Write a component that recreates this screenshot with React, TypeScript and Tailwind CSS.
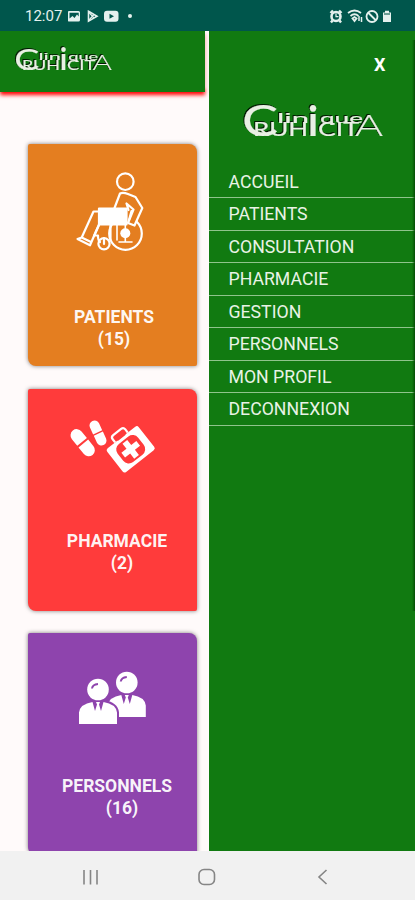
import React from 'react';

const menuItems = [
  'ACCUEIL',
  'PATIENTS',
  'CONSULTATION',
  'PHARMACIE',
  'GESTION',
  'PERSONNELS',
  'MON PROFIL',
  'DECONNEXION',
];

const Logo = ({ className }: { className: string }) => (
  <svg
    viewBox="0 0 140 37"
    preserveAspectRatio="none"
    className={`overflow-visible drop-shadow-[-1px_-1px_0.5px_#021a02] ${className}`}
  >
    <g fill="#e9f0e4" stroke="#e9f0e4" strokeWidth="0.2" fontFamily="Lato, sans-serif">
      <text x="-1" y="34" fontSize="42" textLength="36" lengthAdjust="spacingAndGlyphs">C</text>
      <text x="34" y="20.5" fontSize="13" textLength="32" lengthAdjust="spacingAndGlyphs">lin</text>
      <text x="77" y="20.5" fontSize="13" textLength="43" lengthAdjust="spacingAndGlyphs">que</text>
      <text x="65" y="34" fontSize="42" fontWeight="700" textLength="10" lengthAdjust="spacingAndGlyphs">i</text>
      <text x="10" y="34" fontSize="18.5" textLength="55" lengthAdjust="spacingAndGlyphs">RUH</text>
      <text x="75" y="34" fontSize="18.5" textLength="41" lengthAdjust="spacingAndGlyphs">CIT</text>
      <text x="112" y="34" fontSize="30" fontWeight="300" textLength="28" lengthAdjust="spacingAndGlyphs">A</text>
    </g>
  </svg>
);

const WheelchairIcon = () => (
  <svg width="70" height="82" viewBox="75 170 70 82" fill="none" stroke="#fff" strokeWidth="2.2" strokeLinejoin="round" strokeLinecap="round">
    <circle cx="125.3" cy="181.7" r="8.3" />
    <path d="M114.5 208 120 193.5Q123 192 128 194L135.5 197 142.3 208 134.5 225.5 128 223 133.5 209.5 126.5 203.5 128.5 210" />
    <path d="M131.5 211 129 220" />
    <path d="M99 208.5H126.5V224.5H99Z" fill="#fff" />
    <path d="M99 211.5H93.5L81.7 237.5 77.5 239 90 245.3 99 224.5M81.7 237.5 90 241.5" />
    <path d="M94 235.5H98Q98 241 100 242M99 225 94 236M110.5 225V240" />
    <circle cx="104" cy="243.7" r="5.6" />
    <path d="M104 238V244" />
    <path d="M137 222A16.3 16.3 0 1 1 114 222" />
    <path d="M117 225V240M125.3 225V242M119 242H132" strokeWidth="1.6" />
    <circle cx="125.3" cy="233.3" r="5" fill="#fff" stroke="none" />
  </svg>
);

const PharmacyIcon = () => (
  <svg width="90" height="58" viewBox="68 417 90 58" fill="#fff">
    <g transform="translate(82.7 442.7) rotate(-39)">
      <path d="M-6.2-1V-9.5A6.2 6.2 0 0 1 6.2-9.5V-1Z" />
      <path d="M-6.2 1V9.5A6.2 6.2 0 0 0 6.2 9.5V1Z" />
    </g>
    <g transform="translate(98 433) rotate(-25)">
      <path d="M-5-.8V-8.3A5 5 0 0 1 5-8.3V-.8Z" />
      <path d="M-5 .8V8.3A5 5 0 0 0 5 8.3V.8Z" />
    </g>
    <g transform="translate(130.7 449.3) rotate(-38)">
      <rect x="-20" y="-15" width="40" height="30" rx="2.5" />
      <path d="M-8-15V-19Q-8-22-5-22H5Q8-22 8-19V-15" fill="none" stroke="#fff" strokeWidth="2.2" />
      <path d="M-5-19H5V-14.5H-5Z" fill="#ff3b3b" />
      <rect x="-13" y="-11.5" width="26" height="23" rx="7" fill="#ff3b3b" />
      <path d="M-3-9.5H3V-3H9.5V3H3V9.5H-3V3H-9.5V-3H-3Z" />
    </g>
  </svg>
);

const Person = () => (
  <>
    <circle cx="0" cy="0" r="10.8" />
    <path d="M-6-1Q-5.500-5 0-5.500" fill="none" stroke="#8e44ad" strokeWidth="2" />
    <path d="M-19 34.5V23Q-18 14.5-5.5 12.5L-3 21.5-1 15-2 12.5H2L1 15 3 21.5 5.5 12.5Q18 14.5 19 23V34.5Z" />
  </>
);

const StaffIcon = () => (
  <svg width="70" height="56" viewBox="78 670 70 56" fill="#fff">
    <g transform="translate(126.8 682.5)">
      <Person />
    </g>
    <g transform="translate(98 689.5)">
      <path d="M-19 34.5V23Q-18 14.5-5.5 12.5H5.5Q18 14.5 19 23V34.5Z" fill="#8e44ad" stroke="#8e44ad" strokeWidth="4" />
      <Person />
    </g>
  </svg>
);

const StatusBar = () => (
  <div className="flex h-[31px] shrink-0 items-center justify-between bg-[#00564c] pl-[25px] pr-[22px] text-[#e4f1ee]">
    <div className="flex items-center">
      <span className="w-[43px] text-[15px] leading-5">12:07</span>
      <svg width="64" height="14" viewBox="0 0 64 14" fill="#e4f1ee">
        <path fillRule="evenodd" d="M1 2H10.500Q12 2 12 3.500V11Q12 12.500 10.500 12.500H1Q-.2 12.500-.2 11V3.500Q-.2 2 1 2ZM1.500 3.700V9.500L4.500 7 6.500 9 9 5.500 10.700 7.500V3.700Z" />
        <path d="M20.500 2.300 29 7.200 20.500 12.200Z" fill="none" stroke="#e4f1ee" strokeWidth="1.600" />
        <path d="M21 3.500 26 9M21 11 26 5.500" stroke="#e4f1ee" strokeWidth="1.200" />
        <rect x="36" y="1.700" width="14.500" height="11" rx="3" />
        <path d="M41.500 4.700 46 7.200 41.500 9.700Z" fill="#00564c" />
        <circle cx="62" cy="7" r="2" />
      </svg>
    </div>
    <svg width="64" height="16" viewBox="329 7 64 16" fill="none" stroke="#e4f1ee" strokeWidth="1.5">
      <circle cx="336" cy="15.500" r="4.500" strokeWidth="2.600" />
      <path d="M330.500 12 333 9.500M341.500 12 339 9.500M332.500 19.500 331 21.500M339.500 19.500 341 21.500" strokeWidth="2.400" />
      <path d="M336 12.500V15.700H338.500" strokeWidth="1.200" />
      <path d="M348 12Q354.500 7 361 12M350.500 15Q354.500 11.500 358.500 15M352.500 17.500 354.500 16 356.500 17.500 354.500 20Z" strokeWidth="1.800" />
      <path d="M359 15V20M361.500 16V21" strokeWidth="1.500" />
      <circle cx="372" cy="15.500" r="5.500" strokeWidth="1.800" />
      <path d="M368 11.500 376 19.500" strokeWidth="1.800" />
      <path d="M383 11.500H385V9.700H389V11.500H391V21H383Z" fill="#e4f1ee" stroke="none" />
      <path d="M384 13H390" stroke="#6b9d94" strokeWidth="2" />
    </svg>
  </div>
);

const Card = ({
  title,
  count,
  color,
  icon,
  iconBox,
  titleShift,
  countShift,
}: {
  title: string;
  count: number;
  color: string;
  icon: React.ReactNode;
  iconBox: string;
  titleShift: string;
  countShift: string;
}) => (
  <div
    className={`flex h-[222px] w-[169px] shrink-0 flex-col items-center rounded-[2px] rounded-tr-[8px] rounded-bl-[8px] pt-[26px] font-bold text-white/95 shadow-[0_0_4px_rgba(0,0,0,0.5)] ${color}`}
  >
    <div className={`flex items-start justify-center ${iconBox}`}>{icon}</div>
    <div className={`text-[17.500px] leading-[22px] ${titleShift}`}>{title}</div>
    <div className={`text-[17.500px] leading-[22px] ${countShift}`}>({count})</div>
  </div>
);

const App = () => {
  return (
    <div className="flex h-[900px] w-[415px] flex-col overflow-hidden bg-[#fffafa] font-['Roboto',sans-serif]">
      <StatusBar />

      <div className="flex h-[820px] shrink-0 overflow-hidden">
        <main className="flex w-[209px] shrink-0 flex-col overflow-hidden">
          <header className="h-[60.500px] w-[205px] shrink-0 bg-[#117a11] pl-[15px] pt-[15px] shadow-[3px_-3px_3px_rgba(255,255,255,0.6),0_3px_4px_#ff0000]">
            <Logo className="h-[26px] w-[97px]" />
          </header>
          <div className="flex flex-col gap-[22.500px] pl-[28px] pt-[52.500px]">
            <Card
              title="PATIENTS"
              count={15}
              color="bg-[#e47e20]"
              iconBox="h-[135px] pr-[5px]"
              titleShift="pl-[3px] pt-[0.500px]"
              countShift="pl-[3px]"
              icon={<WheelchairIcon />}
            />
            <Card
              title="PHARMACIE"
              count={2}
              color="bg-[#ff3b3b]"
              iconBox="h-[115.500px] pt-[2px]"
              titleShift="pl-[9px]"
              countShift="pl-[19px]"
              icon={<PharmacyIcon />}
            />
            <Card
              title="PERSONNELS"
              count={16}
              color="bg-[#8e44ad]"
              iconBox="h-[115.500px] pt-[11px]"
              titleShift="pl-[9px]"
              countShift="pl-[19px]"
              icon={<StaffIcon />}
            />
          </div>
        </main>

        <aside className="relative flex w-[206px] shrink-0 flex-col bg-[#117a11] text-[#e9f3e6] shadow-[0_0_3px_rgba(255,255,255,0.9)]">
          <div className="absolute right-0 top-[9px] h-[571px] w-[3px] bg-linear-to-r from-transparent to-[#064d06]" />
          <div className="flex h-[71px] justify-end pr-[29.500px] pt-[21px]">
            <button className="h-6 text-[18px] leading-[26px] font-bold text-white">X</button>
          </div>
          <div className="h-[64px] pl-[34px]">
            <Logo className="h-[37px] w-[140px]" />
          </div>
          <nav className="flex flex-col">
            {menuItems.map((item) => (
              <a key={item} className="h-[32.450px] border-b border-[#8fc48c] pl-[19.500px] text-[17.700px] leading-[33px]">
                {item}
              </a>
            ))}
          </nav>
        </aside>
      </div>

      <footer className="flex h-[49px] shrink-0 items-center bg-[#f1f1f1] pl-[82px] pt-[2px] text-[#858585]">
        <svg width="250" height="20" viewBox="82 867 250 20" fill="none" stroke="currentColor" strokeWidth="1.600">
          <path d="M84 870V884.500M90.500 870V884.500M97 870V884.500" />
          <rect x="199" y="869.500" width="15.500" height="15" rx="5" />
          <path d="M326.500 870 319 877 326.500 884" />
        </svg>
      </footer>
    </div>
  );
};

export default App;
